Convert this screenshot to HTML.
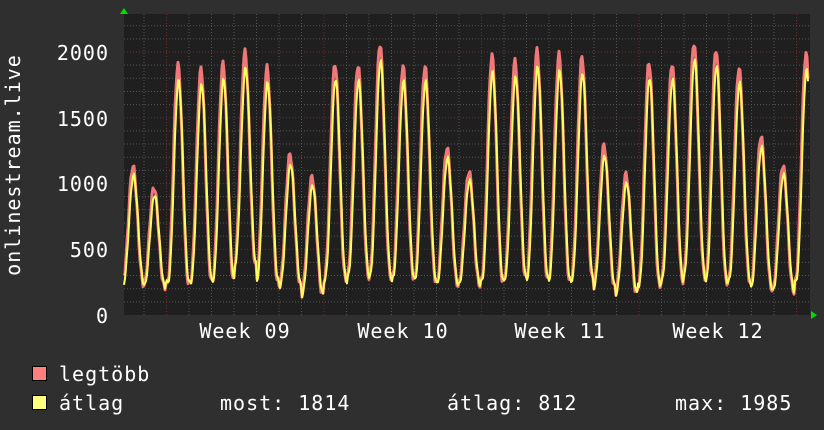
<!DOCTYPE html>
<html><head><meta charset="utf-8"><style>
html,body{margin:0;padding:0;background:#2f2f2f;width:824px;height:430px;overflow:hidden}
svg{display:block}
text{font-family:"DejaVu Sans Mono","Liberation Mono",monospace;fill:#fff;font-size:20px;letter-spacing:1px}
</style></head><body>
<svg id="s" width="824" height="430" xmlns="http://www.w3.org/2000/svg">
<rect x="0" y="0" width="824" height="430" fill="#2f2f2f"/>
<rect x="124" y="14" width="686" height="301" fill="#1f1f1f"/>
<g id="grid"></g>
<g id="data"></g>
<polygon points="120,14 128,14 124,8" fill="#00dd00"/>
<polygon points="811,311 811,319 817,315" fill="#00dd00"/>
<text x="109" y="60" text-anchor="end">2000</text>
<text x="109" y="126" text-anchor="end">1500</text>
<text x="109" y="191" text-anchor="end">1000</text>
<text x="109" y="257" text-anchor="end">500</text>
<text x="109" y="323" text-anchor="end">0</text>
<text transform="translate(20,165) rotate(-90)" text-anchor="middle">onlinestream.live</text>
<text x="245" y="338" text-anchor="middle">Week 09</text>
<text x="403" y="338" text-anchor="middle">Week 10</text>
<text x="560" y="338" text-anchor="middle">Week 11</text>
<text x="718" y="338" text-anchor="middle">Week 12</text>
<rect x="32.5" y="366.5" width="14" height="14" fill="#ff7f7f" stroke="#000"/>
<rect x="32.5" y="395.5" width="14" height="14" fill="#ffff7f" stroke="#000"/>
<text x="59" y="381">legtöbb</text>
<text x="59" y="410">átlag</text>
<text x="220" y="410">most: 1814</text>
<text x="447" y="410">átlag: 812</text>
<text x="675" y="410">max: 1985</text>
</svg>
<script>
var NS="http://www.w3.org/2000/svg";
function el(p,t,a){var e=document.createElementNS(NS,t);for(var k in a)e.setAttribute(k,a[k]);p.appendChild(e);return e;}
var g=document.getElementById("grid");
function Y(v){return 315-v*263/2000;}
for(var v=100;v<=2200;v+=100){var y=Y(v);if(y<14)break;
 el(g,"line",{x1:124,x2:810,y1:y,y2:y,stroke:(v%500==0)?"#6e2c2c":"#555","stroke-width":1,"stroke-dasharray":"1,2"});}
for(var i=0;i<31;i++){var x=144+i*22.5;if(x>810)break;
 var maj=Math.abs(((x-166.6)/157.5)-Math.round((x-166.6)/157.5))<0.03;
 el(g,"line",{x1:x,x2:x,y1:14,y2:315,stroke:maj?"#6e2c2c":"#555","stroke-width":1,"stroke-dasharray":"1,2"});}
var peaks=[[133,1130],[154,970],[178,1900],[201,1870],[223,1910],[245,2000],[267,1880],[290,1220],[312,1050],[335,1910],[358,1900],[380,2060],[403,1890],[425,1890],[447,1270],[469,1090],[492,1970],[515,1930],[537,2010],[559,1980],[582,1960],[604,1290],[626,1070],[649,1920],[672,1910],[694,2070],[716,2020],[739,1880],[761,1360],[783,1140],[806,1985]];
var lows=[230,210,240,250,260,380,260,220,150,270,290,290,280,260,230,230,260,280,270,260,270,210,160,220,260,290,250,260,200,180,250];
var d=document.getElementById("data");
function val(x,scale){
 for(var i=0;i<peaks.length;i++){var dx=x-peaks[i][0];if(Math.abs(dx)>11.25)continue;
  var c=(1+Math.cos(Math.PI*dx/11.25))/2;c=Math.pow(c,1.3);
  var lo=lows[i];return lo+(peaks[i][1]*scale-lo)*c;}
 return 250;
}
var pm="",pa="";
for(var x=124;x<=808;x+=1){
 var n=Math.sin(x*1.7)*25;
 var vm=val(x,1)+n, va=val(x-0.6,0.94)+n*0.6;
 if(x==124){vm=300;va=230;}
 pm+=(x==124?"M":"L")+x+","+Y(vm).toFixed(1);
 pa+=(x==124?"M":"L")+x+","+Y(va).toFixed(1);
}
el(d,"path",{d:pm,fill:"none",stroke:"#f07878","stroke-width":3,"stroke-linejoin":"round"});
el(d,"path",{d:pa,fill:"none",stroke:"#ffff60","stroke-width":2,"stroke-linejoin":"round"});
</script>
</body></html>
